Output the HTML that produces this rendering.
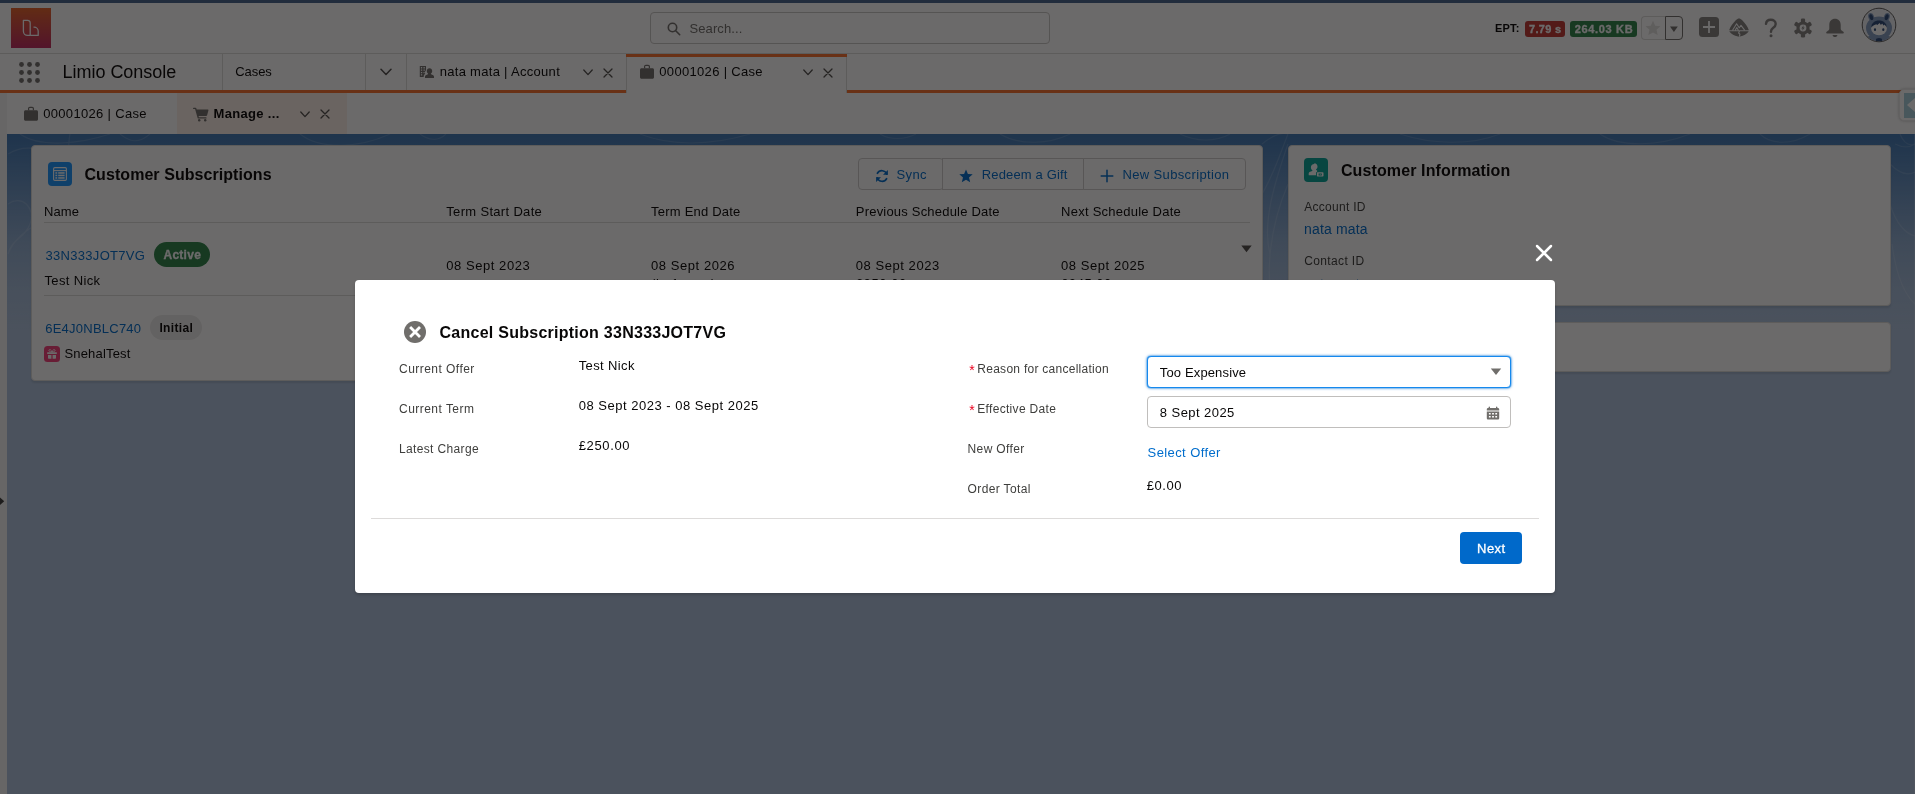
<!DOCTYPE html>
<html lang="en">
<head>
<meta charset="utf-8">
<title>00001026 | Case | Salesforce</title>
<style>
html,body{margin:0;padding:0}
body{width:1915px;height:794px;overflow:hidden;position:relative;background:#b0c4df;font-family:"Liberation Sans",sans-serif;color:#080707}
.a,.t,svg.i{position:absolute}
.t{white-space:pre;line-height:20px}
.w{-webkit-text-stroke:.3px #fff}
#app,#backdrop,#modal-layer{position:absolute;left:0;top:0;width:1915px;height:794px;will-change:transform}
#backdrop{background:rgba(8,7,7,.6)}
.card{position:absolute;background:#fff;border-radius:4px;border:1px solid #dddbda;box-sizing:border-box;box-shadow:0 2px 2px 0 rgba(0,0,0,.1)}
.vsep{position:absolute;width:1px;background:#dddbda;top:54px;height:36px}
.hline{position:absolute;height:1px;background:#dddbda}
.btn{position:absolute;top:158px;height:30px;border:1px solid #d0cecc;background:#fff}
</style>
</head>
<body>
<div id="app">
  <!-- brand band -->
  <div class="a" id="band" style="left:0;top:134px;width:1915px;height:200px;background:linear-gradient(to bottom,rgba(64,120,180,1) 0,rgba(64,120,180,.8) 15%,rgba(64,120,180,.52) 35%,rgba(64,120,180,.26) 55%,rgba(64,120,180,.08) 78%,rgba(64,120,180,0) 100%)"></div>
  <svg class="i" style="left:0;top:134px" width="1915" height="200" viewBox="0 0 1915 200" fill="none" stroke="#fff" stroke-opacity=".13" stroke-width="1.2">
    <path d="M8 20c30-18 60 8 52 40s-40 30-52 60M8 70c14-10 28 4 22 20s-18 14-22 30M20 0c20 14 60 10 90 0M70 0c-6 30 10 60-20 90M120 0c10 8 18 10 30 0"/>
    <path d="M300 0c20 16 60 14 90 0M420 0c8 6 18 8 26 0M640 0c30 12 70 12 110 0M880 0c10 6 24 6 36 0M1000 0c20 12 50 10 70 0M1180 0c16 8 36 8 50 0"/>
    <path d="M1262 10c10-8 20-12 26-10M1262 60c12-20 18-40 26-60M1270 120c-8-30 4-70 18-110M1275 180c-12-40-4-90 13-130"/>
    <path d="M1400 0c30 10 70 12 100 0M1600 0c20 14 60 12 90 0M1760 0c10 10 30 12 50 0M1890 30c10 10 18 12 25 8M1890 70c6 20 16 30 25 32M1895 10c8 4 14 4 20 0M1892 110c4 30 12 50 23 60M1900 0c4 10 10 12 15 10"/>
  </svg>
  <!-- top strip -->
  <div class="a" style="left:0;top:0;width:1915px;height:3px;background:#48648c"></div>
  <!-- global header -->
  <div class="a" style="left:0;top:3px;width:1915px;height:50px;background:#fff;border-bottom:1px solid #dddbda"></div>
  <!-- logo -->
  <div class="a" style="left:11px;top:8px;width:40px;height:40px;background:linear-gradient(to bottom,#e8642a,#c22a62)"></div>
  <svg class="i" style="left:11px;top:8px" width="40" height="40" viewBox="0 0 40 40" fill="none" stroke="#fff" stroke-width="1.3" stroke-linejoin="round"><path d="M12.4 12.3h4.2a2.6 2.6 0 0 1 2.6 2.6v12.5h-2.6a4.2 4.2 0 0 1-4.2-4.2z"/><path d="M19.2 27.4h8v-4.1a4.1 4.1 0 0 0-4.1-4.1h-.6"/></svg>
  <!-- search -->
  <div class="a" style="left:650px;top:12px;width:398px;height:30px;border:1px solid #c9c7c5;border-radius:4px;background:#fff"></div>
  <svg class="i" style="left:667px;top:22px" width="14" height="14" viewBox="0 0 14 14" fill="none" stroke="#706e6b" stroke-width="1.6" stroke-linecap="round"><circle cx="5.5" cy="5.5" r="4.2"/><path d="M8.7 8.7l4 4"/></svg>
  <!-- EPT -->
  <div class="a" style="left:1525px;top:21px;width:40px;height:16px;border-radius:3px;background:#c23934"></div>
  <div class="a" style="left:1570px;top:21px;width:67px;height:16px;border-radius:3px;background:#2e844a"></div>
  <!-- favorites -->
  <div class="a" style="left:1641px;top:16px;width:23px;height:22px;border:1px solid #dddbda;border-right:0;border-radius:4px 0 0 4px;background:#fff"></div>
  <div class="a" style="left:1665px;top:16px;width:16px;height:22px;border:1px solid #706e6b;border-radius:0 4px 4px 0;background:#fff"></div>
  <svg class="i" style="left:1645px;top:20px" width="16" height="16" viewBox="0 0 16 16"><path fill="#e2e0de" d="M8 .8l2.2 4.9 5.3.5-4 3.6 1.2 5.3L8 12.4l-4.7 2.7 1.2-5.300-4-3.6 5.300-.5z"/></svg>
  <svg class="i" style="left:1669px;top:26px" width="10" height="7" viewBox="0 0 10 7"><path fill="#706e6b" d="M1 .4h7.800L4.900 5.900z"/></svg>
  <!-- header icons -->
  <svg class="i" style="left:1699px;top:17px" width="20" height="20" viewBox="0 0 20 20"><rect width="20" height="20" rx="3.500" fill="#858381"/><path d="M10 4v12M4 10h12" stroke="#fff" stroke-width="1.800"/></svg>
  <svg class="i" style="left:1729px;top:18px" width="20" height="19" viewBox="0 0 20 19"><path fill="#858381" d="M10 .4C11 .4 12 1 13 2C16 5 19 9 19.600 11.500C19.900 12.600 19.600 13.500 19 14.200C17.500 16 15 17.500 11 18.500C10.400 18.700 9.600 18.700 9 18.500C5 17.500 2.500 16 1 14.200C.4 13.500 .1 12.600 .4 11.500C1 9 4 5 7 2C8 1 9 .4 10 .4Z"/><path fill="none" stroke="#fff" stroke-width="1.100" stroke-linejoin="round" d="M3.600 12.200l4-6.400 2.600 4 1.800-2.400 3.600 4.800M6.200 12.200l1.600-2.600 1.600 2.600M0 12.800h20M10.600 12.800l-1 2.200 1.300 1.200-.5 2.400"/></svg>
  <svg class="i" style="left:1764px;top:18px" width="14" height="20" viewBox="0 0 14 20"><path fill="none" stroke="#858381" stroke-width="2.400" stroke-linecap="round" d="M2 5.800C2.300 3.200 4.300 1.800 6.800 1.800c2.800 0 4.900 1.600 4.900 4.100 0 2-1.200 3-2.700 4-1.400 1-2 1.700-2 3.600v.3"/><circle cx="7" cy="17.800" r="1.500" fill="#858381"/></svg>
  <svg class="i" style="left:1793px;top:18px" width="20" height="20" viewBox="0 0 20 20"><g fill="#858381"><circle cx="10" cy="10" r="6.600"/><g id="tooth"><rect x="7.900" y=".6" width="4.200" height="4" rx="1.200"/><rect x="7.900" y="15.400" width="4.200" height="4" rx="1.200"/></g><use href="#tooth" transform="rotate(60 10 10)"/><use href="#tooth" transform="rotate(120 10 10)"/></g><circle cx="10" cy="10" r="3.400" fill="#fff"/><path fill="#858381" d="M10.700 7.300L8.300 10.500h1.500l-.6 2.300 2.500-3.300h-1.500z"/></svg>
  <svg class="i" style="left:1825px;top:18px" width="20" height="20" viewBox="0 0 20 20"><path fill="#858381" d="M10 .8c3.400 0 5.700 2.500 5.700 6v3.700c0 1.300.9 2.300 2.300 2.900.6.300.8.600.8 1 0 .6-.4 1-1.100 1H2.300c-.7 0-1.100-.4-1.100-1 0-.4.200-.7.800-1 1.400-.6 2.300-1.600 2.300-2.900V6.800c0-3.500 2.300-6 5.700-6zM7.600 16.900h4.800c-.2 1.300-1.100 2.100-2.400 2.100s-2.200-.8-2.400-2.100z"/></svg>
  <!-- avatar -->
  <svg class="i" style="left:1861px;top:7px" width="36" height="36" viewBox="0 0 36 36"><circle cx="18" cy="18" r="16.800" fill="#eef1f6" stroke="#5b5957" stroke-width="1"/><clipPath id="avc"><circle cx="18" cy="18" r="16.300"/></clipPath><g clip-path="url(#avc)"><ellipse cx="18" cy="21" rx="13" ry="11.600" fill="#869dc0"/><ellipse cx="10.200" cy="10" rx="2.900" ry="4.100" transform="rotate(-18 10.200 10)" fill="#869dc0"/><ellipse cx="25.800" cy="10" rx="2.900" ry="4.100" transform="rotate(18 25.800 10)" fill="#869dc0"/><path fill="#869dc0" d="M7.500 29l-2.500 8h26l-2.500-8z"/><ellipse cx="10.300" cy="10.200" rx="1.800" ry="3" transform="rotate(-18 10.300 10.200)" fill="#2c4a78"/><ellipse cx="25.700" cy="10.200" rx="1.800" ry="3" transform="rotate(18 25.700 10.200)" fill="#2c4a78"/><ellipse cx="18" cy="21.400" rx="7.900" ry="6.900" fill="#fff"/><path fill="#2c4a78" d="M10.200 20.600c0-4.300 3.400-7 7.800-7s7.800 2.700 7.800 7c-.7-1.300-1.600-2.300-2.700-3l-.3 1.200-1.700-2.300-1.200 1.600-1.300-2-2.600 2.200-.4-1.100c-2.200.6-4.200 1.800-5.400 3.400z"/><ellipse cx="14" cy="22.700" rx="1.100" ry="1.400" fill="#2c4a78"/><ellipse cx="22.300" cy="22.700" rx="1.100" ry="1.400" fill="#2c4a78"/><ellipse cx="18" cy="32.900" rx="3.100" ry="1.900" fill="#2c4a78"/></g></svg>

  <!-- nav bar -->
  <div class="a" style="left:0;top:54px;width:1915px;height:36px;background:#fff"></div>
  <div class="a" style="left:0;top:90px;width:1915px;height:3px;background:#f9702d"></div>
  <div class="vsep" style="left:222px"></div>
  <div class="vsep" style="left:365px"></div>
  <div class="vsep" style="left:406px"></div>
  <!-- active tab -->
  <div class="a" style="left:626px;top:54px;width:219px;height:39px;background:#fff;border-left:1px solid #dddbda;border-right:1px solid #dddbda"></div>
  <div class="a" style="left:626px;top:54px;width:221px;height:3px;background:#f9702d"></div>
  <!-- app launcher -->
  <svg class="i" style="left:19px;top:62px" width="21" height="21" viewBox="0 0 21 21" fill="#706e6b"><circle cx="2.500" cy="2.500" r="2.400"/><circle cx="10.500" cy="2.500" r="2.400"/><circle cx="18.500" cy="2.500" r="2.400"/><circle cx="2.500" cy="10.500" r="2.400"/><circle cx="10.500" cy="10.500" r="2.400"/><circle cx="18.500" cy="10.500" r="2.400"/><circle cx="2.500" cy="18.500" r="2.400"/><circle cx="10.500" cy="18.500" r="2.400"/><circle cx="18.500" cy="18.500" r="2.400"/></svg>
  <!-- chevrons / closes in nav -->
  <svg class="i" style="left:380px;top:68px" width="12" height="8" viewBox="0 0 12 8" fill="none" stroke="#514f4d" stroke-width="1.500" stroke-linecap="round" stroke-linejoin="round"><path d="M1 1.200l5 5.300 5-5.300"/></svg>
  <svg class="i" style="left:583px;top:69px" width="10" height="7" viewBox="0 0 10 7" fill="none" stroke="#514f4d" stroke-width="1.300" stroke-linecap="round" stroke-linejoin="round"><path d="M.8 1l4.200 4.600L9.200 1"/></svg>
  <svg class="i" style="left:603px;top:68px" width="10" height="10" viewBox="0 0 10 10" fill="none" stroke="#514f4d" stroke-width="1.300" stroke-linecap="round"><path d="M1 1l8 8M9 1l-8 8"/></svg>
  <svg class="i" style="left:803px;top:69px" width="10" height="7" viewBox="0 0 10 7" fill="none" stroke="#514f4d" stroke-width="1.300" stroke-linecap="round" stroke-linejoin="round"><path d="M.8 1l4.200 4.600L9.200 1"/></svg>
  <svg class="i" style="left:823px;top:68px" width="10" height="10" viewBox="0 0 10 10" fill="none" stroke="#514f4d" stroke-width="1.300" stroke-linecap="round"><path d="M1 1l8 8M9 1l-8 8"/></svg>
  <!-- account icon -->
  <svg class="i" style="left:419px;top:65px" width="15" height="15" viewBox="0 0 15 15"><path fill="#706e6b" fill-rule="evenodd" d="M.8.900h6.200v4.300c-1 1-1.300 2.200-.8 3.600-.9.700-1.500 1.500-1.500 2.500v.7H.8zM1.900 2.100v1.300h1.300V2.100zm2.600 0v1.300h1.300V2.100zM1.900 4.500v1.300h1.300V4.500zm2.600 0v1.300h1.300V4.500zM1.900 6.900v1.300h1.300V6.900zm2.600 0v1.300h1.100V6.900zM1.900 9.300v1.300h1.300V9.300z"/><path fill="#706e6b" transform="translate(0 1)" d="M10.500 2.300c1.600 0 2.700 1.200 2.700 2.800 0 1.100-.5 2-1.200 2.500-.2.200-.2.500.1.600l1.600.7c.8.400 1.300.9 1.300 1.700v1.500H6v-1.500c0-.8.500-1.300 1.300-1.700l1.600-.7c.3-.1.300-.4.100-.6-.7-.5-1.200-1.400-1.200-2.500 0-1.600 1.100-2.800 2.700-2.800z"/></svg>
  <!-- briefcase icons -->
  <svg class="i" style="left:640px;top:64px" width="14" height="15" viewBox="0 0 14 15"><path fill="#706e6b" d="M1.500 4.200h11c.8 0 1.500.7 1.500 1.500v7.600c0 .8-.7 1.500-1.500 1.500h-11c-.8 0-1.500-.7-1.500-1.500V5.700c0-.8.700-1.500 1.500-1.500z"/><path fill="none" stroke="#706e6b" stroke-width="1.200" d="M4.600 4.200V2.600c0-.7.600-1.300 1.300-1.300h2.200c.7 0 1.300.6 1.300 1.300v1.600"/></svg>

  <!-- subtab bar -->
  <div class="a" style="left:0;top:93px;width:1915px;height:41px;background:#fff"></div>
  <div class="a" style="left:177px;top:93px;width:170px;height:41px;background:#fcefe8"></div>
  <svg class="i" style="left:24px;top:106px" width="14" height="15" viewBox="0 0 14 15"><path fill="#706e6b" d="M1.500 4.200h11c.8 0 1.500.7 1.500 1.500v7.600c0 .8-.7 1.500-1.500 1.500h-11c-.8 0-1.500-.7-1.500-1.500V5.700c0-.8.700-1.500 1.500-1.500z"/><path fill="none" stroke="#706e6b" stroke-width="1.200" d="M4.600 4.200V2.600c0-.7.600-1.300 1.300-1.300h2.200c.7 0 1.300.6 1.300 1.300v1.600"/></svg>
  <svg class="i" style="left:193px;top:107px" width="16" height="15" viewBox="0 0 16 15"><path fill="#706e6b" d="M.7.700h1.800c.4 0 .7.200.8.600l.4 1.300h11c.5 0 .8.500.7.900l-1.300 4.700c-.1.500-.5.800-1 .8H5.600l.3 1.200h7c.4 0 .7.300.7.700s-.3.700-.7.700H5.400c-.4 0-.7-.2-.800-.600L2.100 2.100H.7C.3 2.100 0 1.800 0 1.400S.3.700.7.700z"/><circle cx="6.200" cy="13.300" r="1.200" fill="#706e6b"/><circle cx="12.200" cy="13.300" r="1.200" fill="#706e6b"/></svg>
  <svg class="i" style="left:300px;top:111px" width="10" height="7" viewBox="0 0 10 7" fill="none" stroke="#514f4d" stroke-width="1.300" stroke-linecap="round" stroke-linejoin="round"><path d="M.8 1l4.200 4.600L9.200 1"/></svg>
  <svg class="i" style="left:320px;top:109px" width="10" height="10" viewBox="0 0 10 10" fill="none" stroke="#514f4d" stroke-width="1.300" stroke-linecap="round"><path d="M1 1l8 8M9 1l-8 8"/></svg>

  <!-- left collapsed strip -->
  <div class="a" style="left:0;top:93px;width:7px;height:701px;background:#f6f5f4"></div>
  <svg class="i" style="left:0;top:497px" width="6" height="9" viewBox="0 0 6 9"><path fill="#3e3e3c" d="M0 .6l4.200 3.700L0 8z"/></svg>
  <!-- right-edge widget -->
  <div class="a" style="left:1899px;top:89px;width:24px;height:32px;background:#fff;border:1px solid #ecebea;border-radius:5px;box-sizing:border-box;box-shadow:0 0 3px rgba(0,0,0,.25)"></div>
  <div class="a" style="left:1904px;top:93px;width:12px;height:25px;background:#a9cfdc"></div>
  <svg class="i" style="left:1907px;top:98px" width="8" height="14" viewBox="0 0 8 14"><path fill="#fff" d="M8 0v14L0 7z"/></svg>
  <div class="a" style="left:1914px;top:122px;width:1px;height:672px;background:rgba(255,255,255,.18)"></div>

  <!-- ===== Customer Subscriptions card ===== -->
  <div class="card" style="left:31px;top:145px;width:1232px;height:236px"></div>
  <svg class="i" style="left:48px;top:162px" width="24" height="24" viewBox="0 0 24 24"><rect width="24" height="24" rx="4" fill="#1b96ff"/><g fill="none" stroke="#fff" stroke-width="1.100"><rect x="5.600" y="5.600" width="12.800" height="12.800" rx="1.200"/><path d="M5.600 8.600h12.800"/></g><g fill="#fff"><rect x="7.400" y="10.200" width="1.800" height="1.500"/><rect x="10.200" y="10.200" width="6.400" height="1.500"/><rect x="7.400" y="12.700" width="1.800" height="1.500"/><rect x="10.200" y="12.700" width="6.400" height="1.500"/><rect x="7.400" y="15.200" width="1.800" height="1.500"/><rect x="10.200" y="15.200" width="6.400" height="1.500"/></g></svg>
  <!-- button group -->
  <div class="btn" style="left:858px;width:84px;border-radius:4px"></div>
  <div class="btn" style="left:942px;width:141px;border-left:1px solid #d0cecc"></div>
  <div class="btn" style="left:1083px;width:161px;border-radius:0 4px 4px 0"></div>
  <svg class="i" style="left:875px;top:169px" width="14" height="14" viewBox="0 0 14 14" fill="none" stroke="#006dcc" stroke-width="1.700" stroke-linecap="round"><path d="M11.800 5.200A5.200 5.200 0 0 0 2.400 4.300"/><path d="M2.200 8.800a5.200 5.200 0 0 0 9.400.900"/><path fill="#006dcc" stroke="none" d="M12.900.900v4.900H8z"/><path fill="#006dcc" stroke="none" d="M1.100 13.100V8.200H6z"/></svg>
  <svg class="i" style="left:959px;top:169px" width="14" height="14" viewBox="0 0 14 14"><path fill="#006dcc" d="M7 .4l1.900 4.500 4.800.4-3.700 3.200 1.200 4.800L7 10.700l-4.200 2.600L4 8.500.3 5.300l4.800-.4z"/></svg>
  <svg class="i" style="left:1100px;top:169px" width="14" height="14" viewBox="0 0 14 14" fill="none" stroke="#006dcc" stroke-width="1.500" stroke-linecap="round"><path d="M7 1.200v11.600M1.200 7h11.600"/></svg>
  <!-- table lines -->
  <div class="hline" style="left:44px;top:222px;width:1206px"></div>
  <div class="hline" style="left:44px;top:295px;width:1206px"></div>
  <svg class="i" style="left:1241px;top:245px" width="11" height="8" viewBox="0 0 11 8"><path fill="#514f4d" d="M.3.600h10.400L5.500 7.300z"/></svg>
  <!-- badges -->
  <div class="a" style="left:154px;top:242px;width:56px;height:25px;border-radius:13px;background:#2e844a"></div>
  <div class="a" style="left:150px;top:315px;width:52px;height:25px;border-radius:13px;background:#ecebea"></div>
  <!-- gift icon -->
  <svg class="i" style="left:44px;top:346px" width="16" height="16" viewBox="0 0 16 16"><rect width="16" height="16" rx="3.500" fill="#f83f7b"/><g fill="#fff"><path d="M3.200 6.300h9.600v1.700H3.200zM4 8.900h3.400v3.900H4.700a.7.700 0 0 1-.7-.7zM8.600 8.900H12v3.200a.7.700 0 0 1-.7.700H8.600z"/><path d="M8 5.900C7 3 5 3.200 4.900 4.400c-.1 1 1.300 1.500 3.100 1.500zm0 0c1-2.900 3-2.700 3.100-1.500.1 1-1.300 1.500-3.100 1.500z" fill="none" stroke="#fff" stroke-width=".9"/></g></svg>

  <!-- ===== Customer Information card ===== -->
  <div class="card" style="left:1288px;top:145px;width:603px;height:161px"></div>
  <svg class="i" style="left:1304px;top:158px" width="24" height="24" viewBox="0 0 24 24"><rect width="24" height="24" rx="4" fill="#06a59a"/><path fill="#fff" d="M10.300 5.200c1.900 0 3.200 1.400 3.200 3.300 0 1.300-.6 2.300-1.400 2.900-.3.200-.2.600.1.700l.9.400v1.200c-.7.200-1.100.7-1.100 1.400v2.100H4.700v-1.400c0-.9.500-1.600 1.400-2l2.100-.9c.3-.1.400-.5.100-.7-.8-.6-1.400-1.600-1.400-2.900 0-1.900 1.300-3.300 3.400-3.300z"/><rect x="12.900" y="14.300" width="6.600" height="4.200" rx=".7" fill="#fff"/><path fill="#06a59a" d="M14.600 15.400h3.200v2h-3.200z"/><path fill="#fff" d="M15.600 16.400l.6-.6.600.6-.6.600z"/></svg>
  <!-- third card -->
  <div class="card" style="left:1288px;top:322px;width:603px;height:50px"></div>

<span class="t" style="left:689.4px;top:19px;font-size:13px;color:#706e6b;letter-spacing:0.12px;">Search...</span>
<span class="t" style="left:1495.0px;top:18px;font-size:11px;color:#080707;font-weight:700;letter-spacing:0.19px;">EPT:</span>
<span class="t w" style="left:1529.1px;top:19px;font-size:11px;color:#fff;font-weight:700;letter-spacing:0.27px;">7.79 s</span>
<span class="t w" style="left:1574.7px;top:19px;font-size:11px;color:#fff;font-weight:700;letter-spacing:0.67px;">264.03 KB</span>
<span class="t" style="left:62.5px;top:62px;font-size:18px;color:#080707;letter-spacing:-0.02px;">Limio Console</span>
<span class="t" style="left:235.2px;top:62px;font-size:13px;color:#080707;letter-spacing:-0.05px;">Cases</span>
<span class="t" style="left:439.7px;top:62px;font-size:13px;color:#080707;letter-spacing:0.30px;">nata mata | Account</span>
<span class="t" style="left:659.3px;top:62px;font-size:13px;color:#080707;letter-spacing:0.32px;">00001026 | Case</span>
<span class="t" style="left:43.2px;top:104px;font-size:13px;color:#080707;letter-spacing:0.33px;">00001026 | Case</span>
<span class="t" style="left:213.6px;top:104px;font-size:13px;color:#080707;font-weight:700;letter-spacing:0.32px;">Manage ...</span>
<span class="t" style="left:84.5px;top:165px;font-size:16px;color:#080707;font-weight:700;letter-spacing:0.06px;">Customer Subscriptions</span>
<span class="t" style="left:896.6px;top:165px;font-size:13px;color:#006dcc;letter-spacing:0.35px;">Sync</span>
<span class="t" style="left:981.8px;top:165px;font-size:13px;color:#006dcc;letter-spacing:0.14px;">Redeem a Gift</span>
<span class="t" style="left:1122.4px;top:165px;font-size:13px;color:#006dcc;letter-spacing:0.37px;">New Subscription</span>
<span class="t" style="left:44.1px;top:202px;font-size:13px;color:#080707;letter-spacing:0.06px;">Name</span>
<span class="t" style="left:446.3px;top:202px;font-size:13px;color:#080707;letter-spacing:0.32px;">Term Start Date</span>
<span class="t" style="left:651.1px;top:202px;font-size:13px;color:#080707;letter-spacing:0.21px;">Term End Date</span>
<span class="t" style="left:855.8px;top:202px;font-size:13px;color:#080707;letter-spacing:0.20px;">Previous Schedule Date</span>
<span class="t" style="left:1061.1px;top:202px;font-size:13px;color:#080707;letter-spacing:0.24px;">Next Schedule Date</span>
<span class="t" style="left:45.5px;top:246px;font-size:13px;color:#006dcc;letter-spacing:0.30px;">33N333JOT7VG</span>
<span class="t w" style="left:163.5px;top:245px;font-size:12px;color:#fff;font-weight:700;letter-spacing:0.26px;">Active</span>
<span class="t" style="left:44.5px;top:271px;font-size:13px;color:#080707;letter-spacing:0.35px;">Test Nick</span>
<span class="t" style="left:446.3px;top:256px;font-size:13px;color:#080707;letter-spacing:0.55px;">08 Sept 2023</span>
<span class="t" style="left:651.1px;top:256px;font-size:13px;color:#080707;letter-spacing:0.55px;">08 Sept 2026</span>
<span class="t" style="left:855.8px;top:256px;font-size:13px;color:#080707;letter-spacing:0.55px;">08 Sept 2023</span>
<span class="t" style="left:1061.1px;top:256px;font-size:13px;color:#080707;letter-spacing:0.55px;">08 Sept 2025</span>
<span class="t" style="left:651.1px;top:274px;font-size:13px;color:#080707;letter-spacing:0.57px;">(in 1 year)</span>
<span class="t" style="left:855.8px;top:274px;font-size:13px;color:#080707;letter-spacing:0.59px;">£250.00</span>
<span class="t" style="left:1061.1px;top:274px;font-size:13px;color:#080707;letter-spacing:0.54px;">£245.00</span>
<span class="t" style="left:45.2px;top:319px;font-size:13px;color:#006dcc;letter-spacing:0.24px;">6E4J0NBLC740</span>
<span class="t" style="left:159.4px;top:318px;font-size:12px;color:#080707;font-weight:700;letter-spacing:0.37px;">Initial</span>
<span class="t" style="left:64.4px;top:344px;font-size:13px;color:#080707;letter-spacing:0.18px;">SnehalTest</span>
<span class="t" style="left:1340.9px;top:161px;font-size:16px;color:#080707;font-weight:700;letter-spacing:0.12px;">Customer Information</span>
<span class="t" style="left:1304.2px;top:197px;font-size:12px;color:#3e3e3c;letter-spacing:0.29px;">Account ID</span>
<span class="t" style="left:1304.1px;top:219px;font-size:14px;color:#006dcc;letter-spacing:0.16px;">nata mata</span>
<span class="t" style="left:1304.2px;top:251px;font-size:12px;color:#3e3e3c;letter-spacing:0.37px;">Contact ID</span>
<span class="t" style="left:1304.1px;top:274px;font-size:14px;color:#006dcc;letter-spacing:0.16px;">nata mata</span>
</div>

<div id="backdrop"></div>

<div id="modal-layer">
  <!-- close X -->
  <svg class="i" style="left:1534px;top:243px" width="20" height="20" viewBox="0 0 20 20" fill="none" stroke="#fff" stroke-width="2.500" stroke-linecap="round"><path d="M3 3l14 14M17 3L3 17"/></svg>
  <div class="a" id="modal" style="left:355px;top:280px;width:1200px;height:313px;background:#fff;border-radius:4px;box-shadow:0 2px 3px 0 rgba(0,0,0,.16)"></div>
  <!-- header icon -->
  <svg class="i" style="left:404px;top:321px" width="22" height="22" viewBox="0 0 22 22"><circle cx="11" cy="11" r="11" fill="#706e6b"/><path d="M6.100 6.100L16 16M16 6.100L6.100 16" stroke="#fff" stroke-width="2.800"/></svg>
  <!-- select (focused) -->
  <div class="a" style="left:1147px;top:356px;width:362px;height:30px;border:1px solid #1589ee;border-radius:4px;background:#fff;box-shadow:0 0 3px #0070d2,0 0 1px #1589ee"></div>
  <svg class="i" style="left:1490px;top:368px" width="12" height="8" viewBox="0 0 12 8"><path fill="#706e6b" d="M.8.600h10.400L6 7z"/></svg>
  <!-- date input -->
  <div class="a" style="left:1147px;top:396px;width:362px;height:30px;border:1px solid #c0bebc;border-radius:4px;background:#fff"></div>
  <svg class="i" style="left:1486px;top:406px" width="14" height="14" viewBox="0 0 14 14"><path fill="#706e6b" d="M3.300.600c.4 0 .7.300.7.700v.6h6v-.6c0-.4.300-.7.700-.7s.7.300.7.700v.6h.5c.7 0 1.300.6 1.300 1.300v1.300H.8V3.200c0-.7.600-1.300 1.300-1.300h.5v-.600c0-.4.300-.7.700-.7zM.8 5.400h12.400v6.800c0 .7-.6 1.300-1.300 1.300H2.100c-.7 0-1.300-.6-1.300-1.300zm2.100 1.700v1.500h1.800V7.100zm3.200 0v1.500h1.800V7.100zm3.200 0v1.500h1.800V7.100zM2.900 10v1.500h1.800V10zm3.200 0v1.500h1.800V10zm3.200 0v1.500h1.800V10z"/></svg>
  <!-- divider -->
  <div class="a" style="left:371px;top:518px;width:1168px;height:1px;background:#dddbda"></div>
  <!-- Next button -->
  <div class="a" style="left:1460px;top:532px;width:62px;height:32px;border-radius:4px;background:#0069ca"></div>
<span class="t" style="left:439.5px;top:323px;font-size:16px;color:#080707;font-weight:700;letter-spacing:0.26px;">Cancel Subscription 33N333JOT7VG</span>
<span class="t" style="left:399.0px;top:359px;font-size:12px;color:#3e3e3c;letter-spacing:0.46px;">Current Offer</span>
<span class="t" style="left:578.7px;top:356px;font-size:13px;color:#080707;letter-spacing:0.38px;">Test Nick</span>
<span class="t" style="left:399.0px;top:399px;font-size:12px;color:#3e3e3c;letter-spacing:0.47px;">Current Term</span>
<span class="t" style="left:578.7px;top:396px;font-size:13px;color:#080707;letter-spacing:0.51px;">08 Sept 2023 - 08 Sept 2025</span>
<span class="t" style="left:399.0px;top:439px;font-size:12px;color:#3e3e3c;letter-spacing:0.35px;">Latest Charge</span>
<span class="t" style="left:578.7px;top:436px;font-size:13px;color:#080707;letter-spacing:0.64px;">£250.00</span>
<span class="t" style="left:969.3px;top:360px;font-size:14px;color:#ea001e;">*</span>
<span class="t" style="left:977.3px;top:359px;font-size:12px;color:#3e3e3c;letter-spacing:0.27px;">Reason for cancellation</span>
<span class="t" style="left:1159.8px;top:363px;font-size:13px;color:#080707;letter-spacing:0.14px;">Too Expensive</span>
<span class="t" style="left:969.3px;top:400px;font-size:14px;color:#ea001e;">*</span>
<span class="t" style="left:977.3px;top:399px;font-size:12px;color:#3e3e3c;letter-spacing:0.31px;">Effective Date</span>
<span class="t" style="left:1159.8px;top:403px;font-size:13px;color:#080707;letter-spacing:0.44px;">8 Sept 2025</span>
<span class="t" style="left:967.6px;top:439px;font-size:12px;color:#3e3e3c;letter-spacing:0.36px;">New Offer</span>
<span class="t" style="left:1147.6px;top:443px;font-size:13px;color:#006dcc;letter-spacing:0.40px;">Select Offer</span>
<span class="t" style="left:967.6px;top:479px;font-size:12px;color:#3e3e3c;letter-spacing:0.36px;">Order Total</span>
<span class="t" style="left:1146.8px;top:476px;font-size:13px;color:#080707;letter-spacing:0.55px;">£0.00</span>
<span class="t w" style="left:1477.1px;top:539px;font-size:13px;color:#fff;letter-spacing:0.41px;">Next</span>
</div>
</body>
</html>
